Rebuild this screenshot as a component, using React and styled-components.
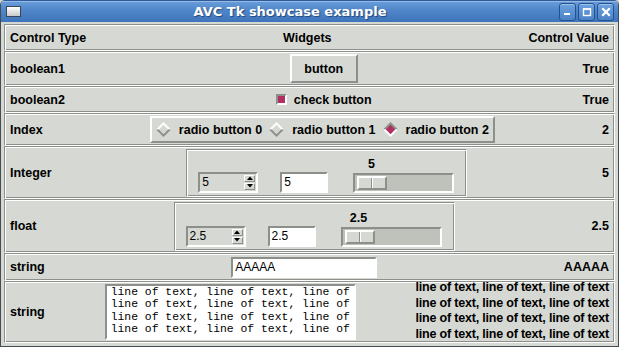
import React from "react"
import styled, { createGlobalStyle } from "styled-components"

const BG = "#d6d9d3"
const DARK = "#8d908a"
const LIGHT = "#ffffff"
const SELECT = "#b03060"
const TROUGH = "#bec2bb"

const GlobalStyle = createGlobalStyle`
	html, body {
		margin: 0;
		padding: 0;
		background: ${BG};
		overflow: hidden;
	}
	* {
		box-sizing: border-box;
	}
`

const LINE = "line of text, line of text, line of text"

const App = () => {
	return (
		<>
			<GlobalStyle />
			<Window>
				<TitleBar>
					<TitleIcon />
					<TitleText>AVC Tk showcase example</TitleText>
					<TitleButtons>
						<TitleButton>
							<svg width="9" height="9" viewBox="0 0 9 9">
								<rect x="1" y="6" width="6" height="2" fill="#fff" />
							</svg>
						</TitleButton>
						<TitleButton>
							<svg width="10" height="10" viewBox="0 0 10 10">
								<rect x="1.5" y="2" width="7" height="6.5" fill="none" stroke="#fff" strokeWidth="1.4" />
								<rect x="1" y="1.3" width="8" height="1.5" fill="#fff" />
							</svg>
						</TitleButton>
						<TitleButton>
							<svg width="10" height="10" viewBox="0 0 10 10">
								<path d="M2 2 L8 8 M8 2 L2 8" stroke="#fff" strokeWidth="2.2" strokeLinecap="square" />
							</svg>
						</TitleButton>
					</TitleButtons>
				</TitleBar>

				<Body>
					<Row $h={27}>
						<Label>Control Type</Label>
						<Cell>
							<Label>Widgets</Label>
						</Cell>
						<Label>Control Value</Label>
					</Row>

					<Row $h={35}>
						<Label>boolean1</Label>
						<Cell>
							<PushButton>button</PushButton>
						</Cell>
						<Label>True</Label>
					</Row>

					<Row $h={27}>
						<Label>boolean2</Label>
						<Cell>
							<Check />
							<Label>check button</Label>
						</Cell>
						<Label>True</Label>
					</Row>

					<Row $h={33}>
						<Label>Index</Label>
						<Cell>
							<RadioFrame>
								{[0, 1, 2].map((i) => (
									<RadioItem key={i}>
										<Diamond selected={i === 2} />
										<Label>radio button {i}</Label>
									</RadioItem>
								))}
							</RadioFrame>
						</Cell>
						<Label>2</Label>
					</Row>

					<Row $h={53}>
						<Label>Integer</Label>
						<Cell>
							<NumberControls value="5" $h={48} />
						</Cell>
						<Label>5</Label>
					</Row>

					<Row $h={54}>
						<Label>float</Label>
						<Cell>
							<NumberControls value="2.5" $h={49} />
						</Cell>
						<Label>2.5</Label>
					</Row>

					<Row $h={28}>
						<Label>string</Label>
						<Cell>
							<Entry $w={146}>AAAAA</Entry>
						</Cell>
						<Label>AAAAA</Label>
					</Row>

					<Row $h={62}>
						<Label>string</Label>
						<Cell>
							<TextBox>{[LINE, LINE, LINE, LINE].join("\n")}</TextBox>
						</Cell>
						<ValueLines>
							<div>{LINE}</div>
							<div>{LINE}</div>
							<div>{LINE}</div>
							<div>{LINE}</div>
						</ValueLines>
					</Row>
				</Body>
			</Window>
		</>
	)
}

const Diamond = ({ selected }) => (
	<svg width="15" height="15" viewBox="0 0 15 15">
		<polygon points="0,7.5 7.5,0 15,7.5" fill={selected ? DARK : LIGHT} />
		<polygon points="0,7.5 7.5,15 15,7.5" fill={selected ? LIGHT : DARK} />
		<polygon points="7.5,2.8 12.2,7.5 7.5,12.2 2.8,7.5" fill={selected ? SELECT : BG} />
	</svg>
)

const NumberControls = ({ value, $h }) => (
	<ControlFrame $h={$h}>
		<Spinbox>
			<SpinText>{value}</SpinText>
			<SpinArrows>
				<ArrowButton>
					<svg width="6" height="4" viewBox="0 0 6 4">
						<polygon points="0,4 3,0.5 6,4" fill="#000" />
					</svg>
				</ArrowButton>
				<ArrowButton>
					<svg width="6" height="4" viewBox="0 0 6 4">
						<polygon points="0,0 6,0 3,3.5" fill="#000" />
					</svg>
				</ArrowButton>
			</SpinArrows>
		</Spinbox>
		<Entry $w={48}>{value}</Entry>
		<ScaleBlock>
			<ScaleValue>{value}</ScaleValue>
			<Trough>
				<Slider />
			</Trough>
		</ScaleBlock>
	</ControlFrame>
)

export default App

const Window = styled.div`
	width: 619px;
	height: 347px;
	display: flex;
	flex-direction: column;
	background: ${BG};
	border: 1px solid #454c54;
	border-top: none;
	border-radius: 5px 5px 0 0;
	overflow: hidden;
	font-family: "Liberation Sans", Arial, sans-serif;
	color: #000;
`

const TitleBar = styled.div`
	height: 22px;
	flex-shrink: 0;
	display: flex;
	align-items: center;
	padding: 0 4px 0 5px;
	background: linear-gradient(#6a9edb, #4f86c9 45%, #3e74ba);
	border-top: 1px solid #2f5c99;
	box-shadow: inset 0 1px rgba(255, 255, 255, 0.3);
`

const TitleIcon = styled.div`
	width: 15px;
	height: 11px;
	border: 1px solid #3b4652;
	background: linear-gradient(#ffffff, #c9c9c9);
`

const TitleText = styled.div`
	flex: 1;
	text-align: center;
	font-family: "DejaVu Sans", sans-serif;
	font-weight: bold;
	font-size: 13px;
	color: #fff;
	text-shadow: 1px 1px 1px #23467a;
	white-space: nowrap;
`

const TitleButtons = styled.div`
	display: flex;
	gap: 2px;
`

const TitleButton = styled.div`
	width: 17px;
	height: 18px;
	border: 1px solid #22518f;
	border-radius: 3px;
	background: linear-gradient(#6ea2df, #4c82c6);
	box-shadow: inset 0 1px rgba(255, 255, 255, 0.35);
	display: flex;
	align-items: center;
	justify-content: center;
`

const Body = styled.div`
	flex: 1;
	display: flex;
	flex-direction: column;
	padding: 2px 3px 3px 3px;
`

const Row = styled.div`
	height: ${(p) => p.$h}px;
	flex-shrink: 0;
	display: flex;
	align-items: center;
	padding: 0 5px;
	border: 1px solid;
	border-color: ${DARK} ${LIGHT} ${LIGHT} ${DARK};
	box-shadow: inset 1px 1px ${LIGHT}, inset -1px -1px ${DARK};
	overflow: hidden;
`

const Label = styled.span`
	font-weight: bold;
	font-size: 12.5px;
	white-space: nowrap;
`

const Cell = styled.div`
	flex: 1;
	display: flex;
	justify-content: center;
	align-items: center;
`

const PushButton = styled.div`
	width: 68px;
	height: 29px;
	display: flex;
	align-items: center;
	justify-content: center;
	font-weight: bold;
	font-size: 12.5px;
	border: 2px solid;
	border-color: ${LIGHT} ${DARK} ${DARK} ${LIGHT};
`

const Check = styled.div`
	width: 11px;
	height: 11px;
	margin-right: 7px;
	background: ${SELECT};
	border: 2px solid;
	border-color: ${DARK} ${LIGHT} ${LIGHT} ${DARK};
`

const RadioFrame = styled.div`
	height: 27px;
	display: flex;
	align-items: center;
	gap: 7px;
	padding: 0 4px 0 4px;
	border: 2px solid;
	border-color: ${LIGHT} ${DARK} ${DARK} ${LIGHT};
`

const RadioItem = styled.div`
	display: flex;
	align-items: center;
	gap: 8px;
`

const ControlFrame = styled.div`
	height: ${(p) => p.$h}px;
	display: flex;
	align-items: flex-end;
	gap: 22px;
	padding: 0 12px 3px 11px;
	border: 1px solid;
	border-color: ${DARK} ${LIGHT} ${LIGHT} ${DARK};
	box-shadow: inset 1px 1px ${LIGHT}, inset -1px -1px ${DARK};
`

const Spinbox = styled.div`
	width: 60px;
	height: 21px;
	display: flex;
	align-items: center;
	padding: 0 1px 0 2px;
	background: ${BG};
	border: 2px solid;
	border-color: ${DARK} ${LIGHT} ${LIGHT} ${DARK};
`

const SpinText = styled.span`
	flex: 1;
	font-size: 12px;
`

const SpinArrows = styled.div`
	display: flex;
	flex-direction: column;
	gap: 1px;
`

const ArrowButton = styled.div`
	width: 11px;
	height: 7px;
	display: flex;
	align-items: center;
	justify-content: center;
	border: 1px solid;
	border-color: ${LIGHT} ${DARK} ${DARK} ${LIGHT};
`

const Entry = styled.div`
	width: ${(p) => p.$w}px;
	height: 21px;
	display: flex;
	align-items: center;
	padding-left: 2px;
	font-size: 12px;
	background: #fff;
	border: 2px solid;
	border-color: ${DARK} ${LIGHT} ${LIGHT} ${DARK};
`

const ScaleBlock = styled.div`
	display: flex;
	flex-direction: column;
	margin-left: 3px;
`

const ScaleValue = styled.div`
	width: 30px;
	margin-left: 3px;
	margin-bottom: 1px;
	text-align: center;
	font-weight: bold;
	font-size: 12.5px;
	line-height: 16px;
`

const Trough = styled.div`
	width: 101px;
	height: 20px;
	padding: 1px 2px;
	background: ${TROUGH};
	border: 2px solid;
	border-color: ${DARK} ${LIGHT} ${LIGHT} ${DARK};
`

const Slider = styled.div`
	position: relative;
	width: 30px;
	height: 14px;
	background: ${BG};
	border: 2px solid;
	border-color: ${LIGHT} ${DARK} ${DARK} ${LIGHT};

	&::after {
		content: "";
		position: absolute;
		left: 12px;
		top: 0;
		bottom: 0;
		width: 1px;
		background: ${DARK};
		box-shadow: 1px 0 ${LIGHT};
	}
`

const TextBox = styled.div`
	width: 251px;
	height: 56px;
	padding: 0 4px;
	background: #fff;
	border: 2px solid;
	border-color: ${DARK} ${LIGHT} ${LIGHT} ${DARK};
	font-family: "Liberation Mono", "Courier New", monospace;
	font-size: 11.4px;
	line-height: 12.3px;
	white-space: pre;
	overflow: hidden;
`

const ValueLines = styled.div`
	align-self: flex-start;
	margin-top: -2px;
	text-align: right;
	font-weight: bold;
	font-size: 12.5px;
	line-height: 15.5px;
	letter-spacing: -0.2px;
	white-space: nowrap;
`
